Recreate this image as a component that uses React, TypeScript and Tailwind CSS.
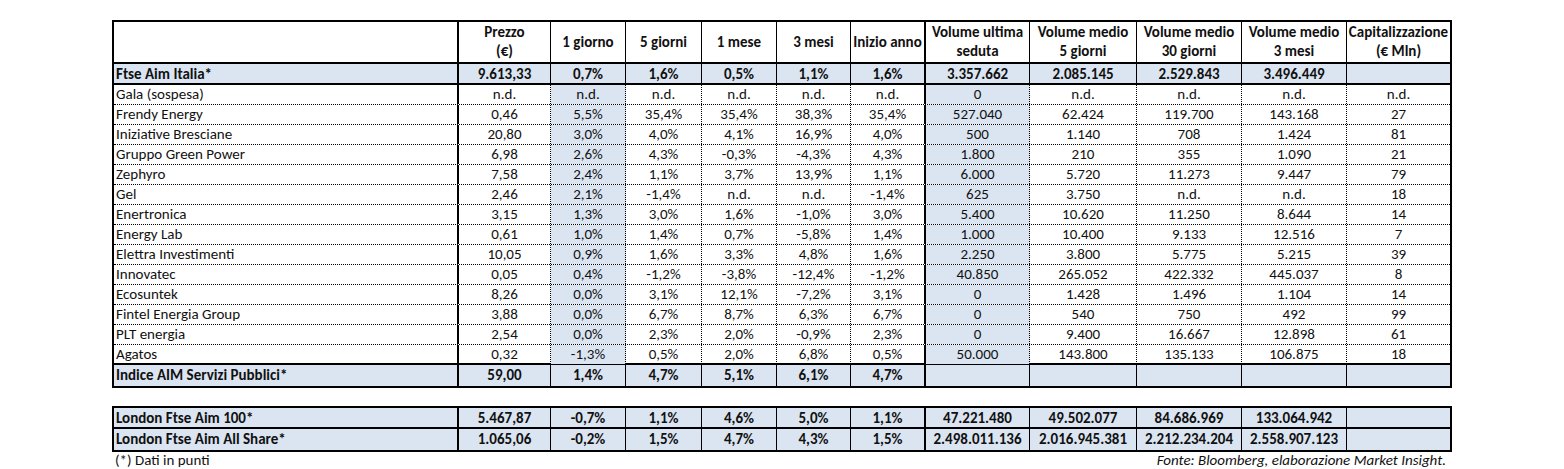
import React from "react";

type Row = { name: string; v: string[] };

const header = [
  ["Prezzo", "(€)"],
  ["1 giorno"],
  ["5 giorni"],
  ["1 mese"],
  ["3 mesi"],
  ["Inizio anno"],
  ["Volume ultima", "seduta"],
  ["Volume medio", "5 giorni"],
  ["Volume medio", "30 giorni"],
  ["Volume medio", "3 mesi"],
  ["Capitalizzazione", "(€ Mln)"],
];

const ftse: Row = {
  name: "Ftse Aim Italia*",
  v: ["9.613,33", "0,7%", "1,6%", "0,5%", "1,1%", "1,6%", "3.357.662", "2.085.145", "2.529.843", "3.496.449", ""],
};

const rows: Row[] = [
  { name: "Gala (sospesa)", v: ["n.d.", "n.d.", "n.d.", "n.d.", "n.d.", "n.d.", "0", "n.d.", "n.d.", "n.d.", "n.d."] },
  { name: "Frendy Energy", v: ["0,46", "5,5%", "35,4%", "35,4%", "38,3%", "35,4%", "527.040", "62.424", "119.700", "143.168", "27"] },
  { name: "Iniziative Bresciane", v: ["20,80", "3,0%", "4,0%", "4,1%", "16,9%", "4,0%", "500", "1.140", "708", "1.424", "81"] },
  { name: "Gruppo Green Power", v: ["6,98", "2,6%", "4,3%", "-0,3%", "-4,3%", "4,3%", "1.800", "210", "355", "1.090", "21"] },
  { name: "Zephyro", v: ["7,58", "2,4%", "1,1%", "3,7%", "13,9%", "1,1%", "6.000", "5.720", "11.273", "9.447", "79"] },
  { name: "Gel", v: ["2,46", "2,1%", "-1,4%", "n.d.", "n.d.", "-1,4%", "625", "3.750", "n.d.", "n.d.", "18"] },
  { name: "Enertronica", v: ["3,15", "1,3%", "3,0%", "1,6%", "-1,0%", "3,0%", "5.400", "10.620", "11.250", "8.644", "14"] },
  { name: "Energy Lab", v: ["0,61", "1,0%", "1,4%", "0,7%", "-5,8%", "1,4%", "1.000", "10.400", "9.133", "12.516", "7"] },
  { name: "Elettra Investimenti", v: ["10,05", "0,9%", "1,6%", "3,3%", "4,8%", "1,6%", "2.250", "3.800", "5.775", "5.215", "39"] },
  { name: "Innovatec", v: ["0,05", "0,4%", "-1,2%", "-3,8%", "-12,4%", "-1,2%", "40.850", "265.052", "422.332", "445.037", "8"] },
  { name: "Ecosuntek", v: ["8,26", "0,0%", "3,1%", "12,1%", "-7,2%", "3,1%", "0", "1.428", "1.496", "1.104", "14"] },
  { name: "Fintel Energia Group", v: ["3,88", "0,0%", "6,7%", "8,7%", "6,3%", "6,7%", "0", "540", "750", "492", "99"] },
  { name: "PLT energia", v: ["2,54", "0,0%", "2,3%", "2,0%", "-0,9%", "2,3%", "0", "9.400", "16.667", "12.898", "61"] },
  { name: "Agatos", v: ["0,32", "-1,3%", "0,5%", "2,0%", "6,8%", "0,5%", "50.000", "143.800", "135.133", "106.875", "18"] },
];

const indice: Row = {
  name: "Indice AIM Servizi Pubblici*",
  v: ["59,00", "1,4%", "4,7%", "5,1%", "6,1%", "4,7%", "", "", "", "", ""],
};

const london: Row[] = [
  {
    name: "London Ftse Aim 100*",
    v: ["5.467,87", "-0,7%", "1,1%", "4,6%", "5,0%", "1,1%", "47.221.480", "49.502.077", "84.686.969", "133.064.942", ""],
  },
  {
    name: "London Ftse Aim All Share*",
    v: ["1.065,06", "-0,2%", "1,5%", "4,7%", "4,3%", "1,5%", "2.498.011.136", "2.016.945.381", "2.212.234.204", "2.558.907.123", ""],
  },
];

const GRID =
  "grid grid-cols-[345px_92px_75px_76px_75px_74px_75px_104px_107px_105px_105px_103px]";

const FONT = { fontFamily: "Calibri, Carlito, Lato, 'Liberation Sans', sans-serif" };

function BoldRow({ row, last }: { row: Row; last?: boolean }) {
  return (
    <div className={`${GRID} h-[21px] bg-[#dbe5f1] font-bold ${last ? "" : "border-b-2 border-black"}`}>
      <div className="border-r-2 border-black pl-[2px] leading-[20px] whitespace-nowrap">{row.name}</div>
      {row.v.map((x, i) => (
        <div
          key={i}
          className={`text-center leading-[20px] whitespace-nowrap ${
            i === 10 ? "" : i === 5 ? "border-r-2 border-black" : "border-r border-black"
          }`}
        >
          {x}
        </div>
      ))}
    </div>
  );
}

function DataRow({ row, last }: { row: Row; last: boolean }) {
  return (
    <div className={`${GRID} h-[20px] ${last ? "border-b-2 border-solid border-black" : "border-b border-dotted border-black"}`}>
      <div className="border-r-2 border-black pl-[2px] leading-[19px] whitespace-nowrap">{row.name}</div>
      {row.v.map((x, i) => (
        <div
          key={i}
          className={`text-center leading-[19px] whitespace-nowrap ${
            i === 1 || i === 6 ? "bg-[#dbe5f1]" : ""
          } ${i === 10 ? "" : i === 5 ? "border-r-2 border-solid border-black" : "border-r border-dotted border-black"}`}
        >
          {x}
        </div>
      ))}
    </div>
  );
}

export default function App() {
  return (
    <div className="min-h-[469px] bg-white pl-[112px] pt-[20px] text-[15px] text-[#111]" style={FONT}>
      <div className="w-[1340px]">
        <div className="border-2 border-black">
          <div className={`${GRID} h-[42px] border-b-2 border-black font-bold`}>
            <div className="border-r-2 border-black" />
            {header.map((h, i) => (
              <div
                key={i}
                className={`flex flex-col items-center justify-center leading-[19px] whitespace-nowrap ${
                  i === 10 ? "" : i === 5 ? "border-r-2 border-black" : "border-r border-black"
                }`}
              >
                {h.map((l, j) => (
                  <span key={j}>{l}</span>
                ))}
              </div>
            ))}
          </div>
          <BoldRow row={ftse} />
          {rows.map((r, i) => (
            <DataRow key={i} row={r} last={i === rows.length - 1} />
          ))}
          <BoldRow row={indice} last />
        </div>

        <div className="mt-[18px] border-2 border-black">
          <BoldRow row={london[0]} />
          <BoldRow row={london[1]} last />
        </div>

        <div className="flex justify-between pl-[3px] pr-[6px] leading-[17px]">
          <span>(*) Dati in punti</span>
          <span className="italic">Fonte: Bloomberg, elaborazione Market Insight.</span>
        </div>
      </div>
    </div>
  );
}
